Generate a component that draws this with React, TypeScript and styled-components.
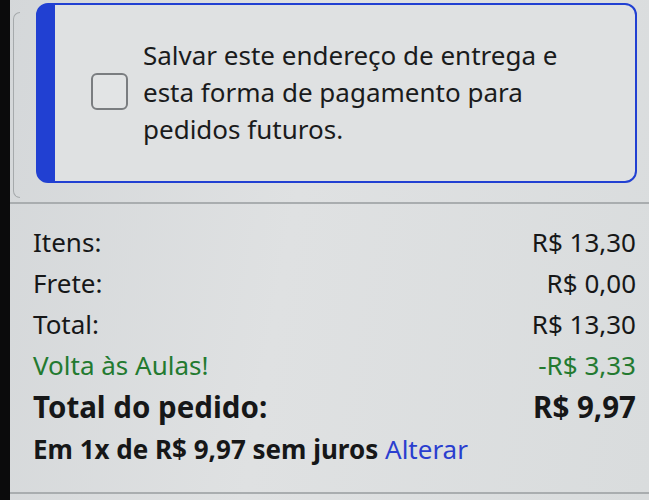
import React from "react";
import styled, { createGlobalStyle } from "styled-components";

const Global = createGlobalStyle`
  html, body { margin: 0; padding: 0; }
  body {
    background: #d9dcdd;
    font-family: "Noto Sans", "Open Sans", sans-serif;
    color: #161718;
  }
`;

const Page = styled.div`
  display: flex;
  height: 500px;
  width: 649px;
  overflow: hidden;
  background: linear-gradient(100deg, #d4d7d9 0%, #dfe1e2 45%, #d9dcdd 100%);
`;

const BlackStrip = styled.div`
  width: 10px;
  flex: none;
  background: #0b0b0c;
`;

const Main = styled.div`
  flex: 1;
  display: flex;
  flex-direction: column;
`;

const TopArea = styled.div`
  height: 202px;
  display: flex;
  flex: none;
`;

const OuterEdge = styled.div`
  flex: none;
  width: 6px;
  margin: 12px 0 4px 3px;
  border: 1.5px solid #a6aaac;
  border-right: none;
  border-radius: 8px 0 0 8px;
`;

const Card = styled.div`
  flex: none;
  box-sizing: border-box;
  width: 601px;
  height: 180px;
  margin: 3px 0 0 16px;
  border: 2.5px solid #2140d2;
  border-left: 19px solid #2140d2;
  border-radius: 12px;
  background: #dfe1e2;
  display: flex;
  align-items: center;
  padding-left: 36px;
  gap: 15px;
`;

const Checkbox = styled.div`
  flex: none;
  box-sizing: border-box;
  width: 37px;
  height: 37px;
  border: 2px solid #7a7d80;
  border-radius: 6px;
  background: #e2e4e5;
  margin-top: -4px;
`;

const SaveText = styled.div`
  font-size: 26px;
  line-height: 37px;
  white-space: nowrap;
  color: #1a1b1c;
  margin-top: -2px;
`;

const Divider = styled.div`
  height: 2px;
  flex: none;
  background: #a9adaf;
`;

const Summary = styled.div`
  flex: none;
  height: 288px;
  box-sizing: border-box;
  padding: 18px 13px 0 23px;
  display: flex;
  flex-direction: column;
`;

const Row = styled.div<{ $tone?: "green" | "strong" }>`
  display: flex;
  justify-content: space-between;
  font-size: ${(p) => (p.$tone === "strong" ? "29.5px" : "26px")};
  line-height: ${(p) => (p.$tone === "strong" ? "42px" : "41px")};
  font-weight: ${(p) => (p.$tone === "strong" ? 700 : 400)};
  color: ${(p) => (p.$tone === "green" ? "#237a30" : "#161718")};
  white-space: nowrap;
`;

const Installments = styled.div`
  font-size: 26px;
  line-height: 42px;
  font-weight: 700;
  white-space: nowrap;
  color: #161718;
`;

const Link = styled.span`
  font-weight: 400;
  color: #2a3ecf;
`;

export default function App() {
  const rows: { label: string; value: string; tone?: "green" | "strong" }[] = [
    { label: "Itens:", value: "R$ 13,30" },
    { label: "Frete:", value: "R$ 0,00" },
    { label: "Total:", value: "R$ 13,30" },
    { label: "Volta às Aulas!", value: "-R$ 3,33", tone: "green" },
    { label: "Total do pedido:", value: "R$ 9,97", tone: "strong" },
  ];
  return (
    <>
      <Global />
      <Page>
        <BlackStrip />
        <Main>
          <TopArea>
            <OuterEdge />
            <Card>
              <Checkbox role="checkbox" aria-checked="false" />
              <SaveText>
                Salvar este endereço de entrega e
                <br />
                esta forma de pagamento para
                <br />
                pedidos futuros.
              </SaveText>
            </Card>
          </TopArea>
          <Divider />
          <Summary>
            {rows.map((r) => (
              <Row key={r.label} $tone={r.tone}>
                <span>{r.label}</span>
                <span>{r.value}</span>
              </Row>
            ))}
            <Installments>
              Em 1x de R$ 9,97 sem juros <Link>Alterar</Link>
            </Installments>
          </Summary>
          <Divider />
        </Main>
      </Page>
    </>
  );
}
